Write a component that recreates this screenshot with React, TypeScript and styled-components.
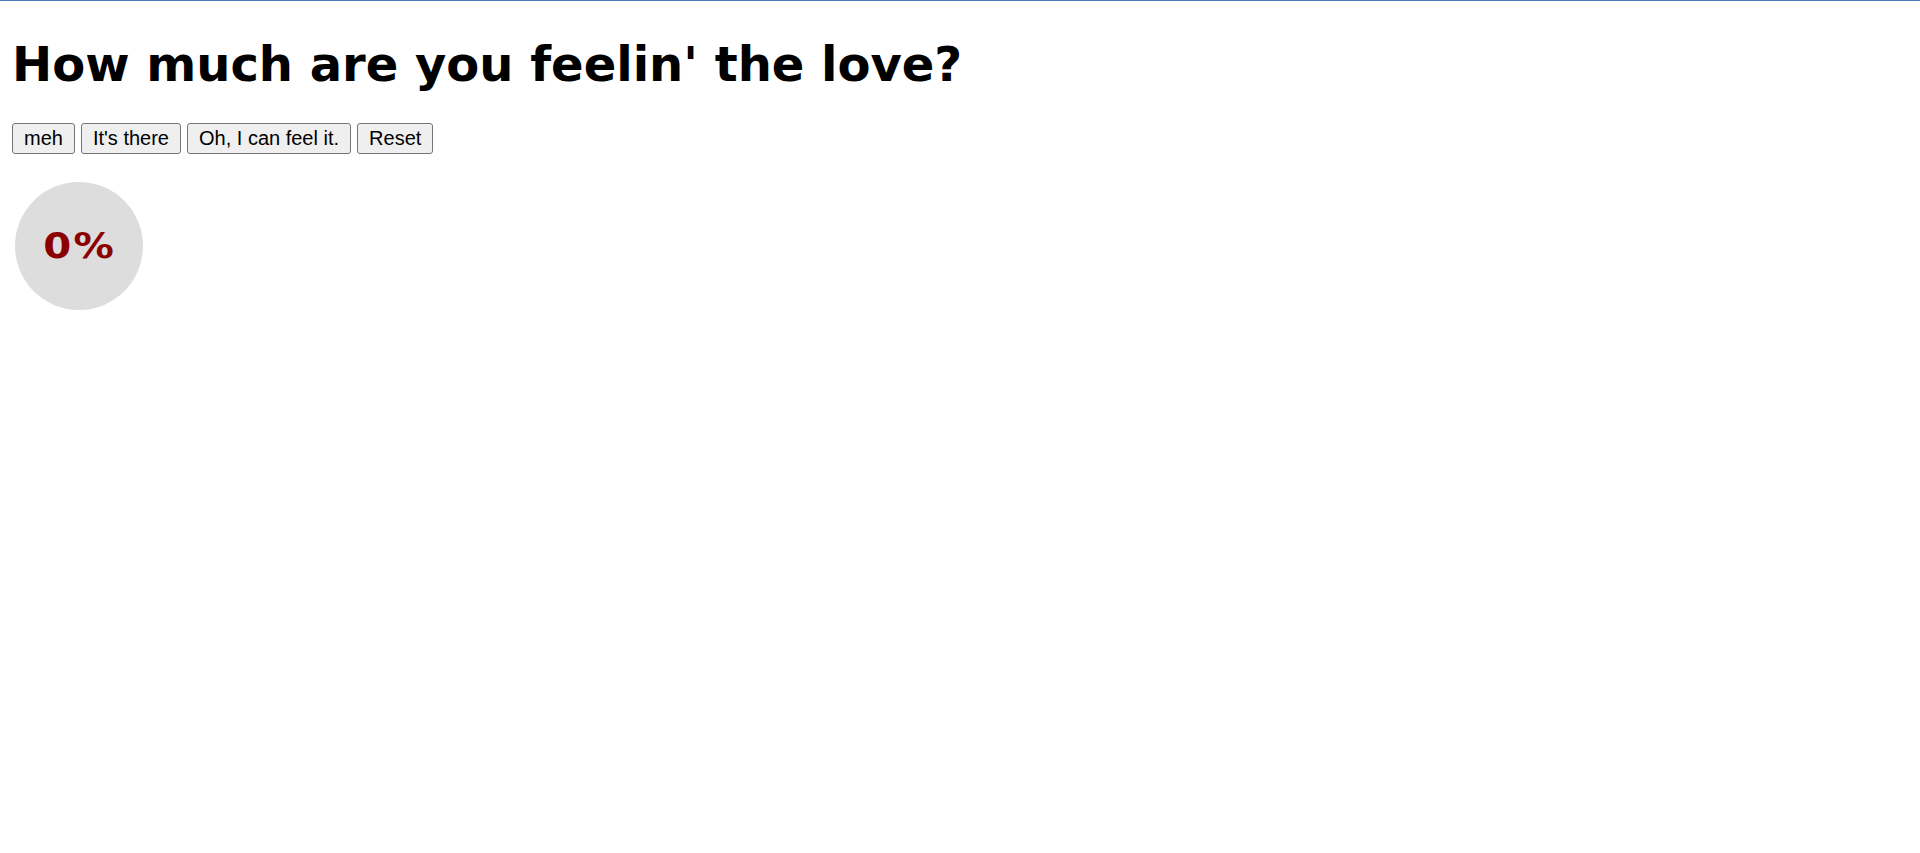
import { useState } from 'react';
import styled, { createGlobalStyle } from 'styled-components';

const GlobalStyle = createGlobalStyle`
  html, body {
    margin: 0;
    padding: 0;
    background: #ffffff;
  }

  body {
    font-family: "DejaVu Sans", Verdana, sans-serif;
    color: #000000;
  }
`;

const Page = styled.div`
  min-height: 100vh;
  border-top: 1px solid #4b7bb8;
  padding: 0 12px;
  box-sizing: border-box;
`;

const Title = styled.h1`
  margin: 35px 0 31px;
  font-family: "DejaVu Sans", Verdana, sans-serif;
  font-size: 48px;
  line-height: 56px;
  font-weight: 700;
  white-space: nowrap;
`;

const ButtonRow = styled.div`
  display: flex;
  gap: 6px;
  margin-bottom: 28px;
`;

const Button = styled.button`
  font-family: "Liberation Sans", Arial, sans-serif;
  font-size: 20px;
  line-height: 23px;
  padding: 3px 11px;
  color: #000000;
  background-color: #efefef;
  border: 1px solid #767676;
  border-radius: 3px;
  cursor: pointer;

  &:hover {
    background-color: #e5e5e5;
  }
`;

const Meter = styled.div`
  width: 128px;
  height: 128px;
  margin-left: 3px;
  border-radius: 50%;
  background: #dddddd;
  display: flex;
  align-items: center;
  justify-content: center;
`;

const MeterValue = styled.span`
  display: inline-block;
  font-family: "DejaVu Sans", Verdana, sans-serif;
  font-size: 35px;
  font-weight: 700;
  letter-spacing: 2px;
  margin-right: -2px;
  transform: scaleX(1.15);
  color: #8b0000;
`;

const levels = [
  { label: 'meh', value: 25 },
  { label: "It's there", value: 50 },
  { label: 'Oh, I can feel it.', value: 100 },
];

export default function App() {
  const [love, setLove] = useState(0);

  return (
    <>
      <GlobalStyle />
      <Page>
        <Title>How much are you feelin' the love?</Title>
        <ButtonRow>
          {levels.map((level) => (
            <Button key={level.label} onClick={() => setLove(level.value)}>
              {level.label}
            </Button>
          ))}
          <Button onClick={() => setLove(0)}>Reset</Button>
        </ButtonRow>
        <Meter>
          <MeterValue>{love}%</MeterValue>
        </Meter>
      </Page>
    </>
  );
}
